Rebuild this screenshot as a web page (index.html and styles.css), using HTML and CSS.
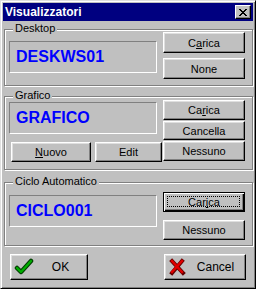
FILE: index.html
```html
<!DOCTYPE html>
<html lang="it">
<head>
    <meta charset="UTF-8">
    <title>Visualizzatori</title>
    <link rel="stylesheet" href="styles.css">
</head>
<body>
    <div class="window">
        <div class="titlebar">
            <span class="title">Visualizzatori</span>
            <button class="close-btn">
                <svg width="8" height="7" viewBox="0 0 8 7" shape-rendering="crispEdges">
                    <path d="M0 0h2v1h-2z M6 0h2v1h-2z M1 1h2v1h-2z M5 1h2v1h-2z M2 2h4v1h-4z M3 3h2v1h-2z M2 4h4v1h-4z M1 5h2v1h-2z M5 5h2v1h-2z M0 6h2v1h-2z M6 6h2v1h-2z" fill="#000"/>
                </svg>
            </button>
        </div>

        <div class="group group-desktop">
            <span class="group-label">Desktop</span>
            <div class="left">
                <div class="field">DESKWS01</div>
            </div>
            <div class="btn-col">
                <button class="btn tall">C<u>a</u>rica</button>
                <button class="btn tall">None</button>
            </div>
        </div>

        <div class="group group-grafico">
            <span class="group-label">Grafico</span>
            <div class="left">
                <div class="field">GRAFICO</div>
                <div class="btn-row">
                    <button class="btn btn-nuovo"><u>N</u>uovo</button>
                    <button class="btn btn-edit">Edit</button>
                </div>
            </div>
            <div class="btn-col">
                <button class="btn">Ca<u>r</u>ica</button>
                <button class="btn short">Cancella</button>
                <button class="btn">Nessuno</button>
            </div>
        </div>

        <div class="group group-ciclo">
            <span class="group-label">Ciclo Automatico</span>
            <div class="left">
                <div class="field">CICLO001</div>
            </div>
            <div class="btn-col">
                <button class="btn focus">Car<u>i</u>ca</button>
                <button class="btn">Nessuno</button>
            </div>
        </div>

        <div class="footer">
            <button class="btn big btn-ok">
                <svg class="icon" width="20" height="18" viewBox="0 0 20 18">
                    <polyline points="3,10 7,14 17,3" fill="none" stroke="#004000" stroke-width="4.5" stroke-linejoin="round" stroke-linecap="round"/>
                    <polyline points="3,10 7,14 17,3" fill="none" stroke="#00b000" stroke-width="2.2" stroke-linejoin="round" stroke-linecap="round"/>
                </svg>
                <span class="btn-text">OK</span>
            </button>
            <button class="btn big btn-cancel">
                <svg class="icon" width="18" height="18" viewBox="0 0 18 18">
                    <path d="M4 3 L15 15 M14 3 L4 15" fill="none" stroke="#600000" stroke-width="4" stroke-linecap="square"/>
                    <path d="M4 3 L14 14 M14 3 L4 14" fill="none" stroke="#e00000" stroke-width="2.4" stroke-linecap="square"/>
                </svg>
                <span class="btn-text">Cancel</span>
            </button>
        </div>
    </div>
</body>
</html>
```

FILE: styles.css
```css
* {
    box-sizing: border-box;
}
body {
    margin: 0;
    background-color: #c0c0c0;
    font-family: "Liberation Sans", Arial, sans-serif;
    font-size: 11px;
    color: black;
}
.window {
    width: 256px;
    height: 289px;
    display: flex;
    flex-direction: column;
    padding: 2px;
    background-color: #c0c0c0;
    border: 1px solid #000;
    border-top-color: #dfdfdf;
    border-left-color: #dfdfdf;
    box-shadow: inset 1px 1px #fff, inset -1px -1px #808080;
}
.titlebar {
    height: 18px;
    display: flex;
    align-items: center;
    justify-content: space-between;
    padding-left: 2px;
    padding-right: 2px;
    background-color: #000080;
    color: white;
}
.title {
    font-weight: bold;
    font-size: 12px;
}
.close-btn {
    width: 16px;
    height: 14px;
    padding: 0;
    display: flex;
    align-items: center;
    justify-content: center;
    background-color: #c0c0c0;
    border: 1px solid #000;
    border-top-color: #fff;
    border-left-color: #fff;
    box-shadow: inset -1px -1px #808080;
}

/* group boxes */
.group {
    position: relative;
    display: flex;
    margin-left: 1px;
    width: 249px;
    padding-left: 4px;
    border: 1px solid #808080;
    box-shadow: inset 1px 1px #fff, 1px 1px #fff;
}
.group-label {
    position: absolute;
    top: -8px;
    left: 8px;
    padding: 0 2px;
    line-height: 13px;
    background-color: #c0c0c0;
}
.left {
    width: 154px;
    display: flex;
    flex-direction: column;
}
.btn-col {
    width: 82px;
    display: flex;
    flex-direction: column;
}
.field {
    width: 148px;
    height: 32px;
    display: flex;
    align-items: center;
    padding-left: 6px;
    border: 1px solid #fff;
    border-top-color: #808080;
    border-left-color: #808080;
    color: #0000ff;
    font-weight: bold;
    font-size: 16px;
}

.group-desktop {
    margin-top: 8px;
    height: 57px;
}
.group-desktop .left {
    padding-top: 11px;
}
.group-desktop .btn-col {
    padding-top: 2px;
    gap: 5px;
}

.group-grafico {
    margin-top: 10px;
    height: 74px;
}
.group-grafico .left {
    padding-top: 5px;
}
.group-grafico .btn-col {
    padding-top: 3px;
    gap: 1px;
}
.btn-row {
    display: flex;
    margin-top: 8px;
    margin-left: 2px;
    gap: 4px;
}

.group-ciclo {
    margin-top: 12px;
    height: 64px;
}
.group-ciclo .left {
    padding-top: 12px;
}
.group-ciclo .btn-col {
    padding-top: 9px;
    gap: 8px;
}

/* buttons */
.btn {
    position: relative;
    height: 20px;
    padding: 0;
    font-family: "Liberation Sans", Arial, sans-serif;
    font-size: 11px;
    color: black;
    background-color: #c0c0c0;
    border: 1px solid #000;
    border-top-color: #fff;
    border-left-color: #fff;
    box-shadow: inset -1px -1px #808080, inset 1px 1px #dfdfdf;
}
.btn.tall {
    height: 21px;
}
.btn.short {
    height: 19px;
}
.btn-nuovo {
    width: 80px;
}
.btn-edit {
    width: 67px;
}
.btn.focus {
    border: 1px solid #000;
    box-shadow: inset 1px 1px #fff, inset -1px -1px #000, inset -2px -2px #808080;
}
.btn.focus::after {
    content: "";
    position: absolute;
    top: 3px;
    left: 3px;
    right: 4px;
    bottom: 4px;
    border: 1px dotted #000;
}

.footer {
    display: flex;
    justify-content: space-between;
    margin-top: 8px;
    padding-left: 7px;
    padding-right: 7px;
}
.btn.big {
    height: 26px;
    display: flex;
    align-items: center;
}
.btn-ok {
    width: 78px;
}
.btn-cancel {
    width: 82px;
}
.icon {
    margin-left: 3px;
    flex-shrink: 0;
}
.btn-text {
    flex: 1;
    text-align: center;
    font-size: 12px;
}
```
